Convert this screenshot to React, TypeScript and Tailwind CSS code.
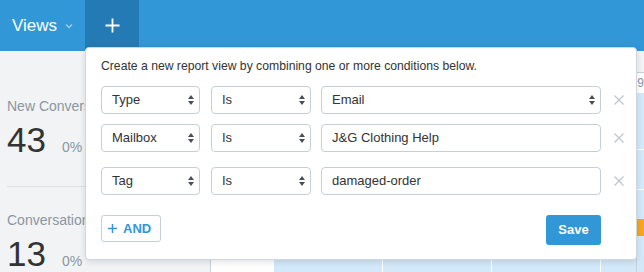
import React from 'react'

const Arrows = () => (
  <svg width="6" height="10" viewBox="0 0 6 10" className="shrink-0">
    <path d="M0 4 L3 0 L6 4 Z" fill="#4a4f55" />
    <path d="M0 6 L3 10 L6 6 Z" fill="#4a4f55" />
  </svg>
)

const Remove = () => (
  <svg width="10" height="10" viewBox="0 0 10 10" className="shrink-0">
    <path d="M0.5 0.5 L9.5 9.5 M9.5 0.5 L0.5 9.5" stroke="#bfc4c9" strokeWidth="1.2" />
  </svg>
)

const Field: React.FC<{ label: string; select?: boolean; className: string }> = ({ label, select, className }) => (
  <div
    className={`h-full flex items-center justify-between pl-[10px] pr-[5px] rounded-[4px] border border-[#c6ced6] bg-white text-[13px] text-[#333] ${className}`}
  >
    <span>{label}</span>
    {select && <Arrows />}
  </div>
)

const rows = [
  { field: 'Type', value: 'Email', valueSelect: true },
  { field: 'Mailbox', value: 'J&G Clothing Help', valueSelect: false },
  { field: 'Tag', value: 'damaged-order', valueSelect: false },
]

const Stat: React.FC<{ label: string; value: string; className?: string }> = ({ label, value, className }) => (
  <div className={className}>
    <div className="text-[14px] leading-[20px] text-[#8b97a1] whitespace-nowrap">{label}</div>
    <div className="flex items-baseline mt-[6px]">
      <span className="text-[35px] leading-[35px] text-[#333]">{value}</span>
      <span className="ml-[16px] text-[14px] text-[#8b97a1]">0%</span>
    </div>
  </div>
)

export default function App() {
  return (
    <div className="relative w-[644px] h-[272px] overflow-hidden bg-[#f1f3f5] font-['Liberation_Sans',Arial,sans-serif]">
      {/* Header */}
      <div className="h-[51px] bg-[#3197d6] flex items-stretch">
        <div className="flex items-center pl-[12px] w-[85px]">
          <span className="text-[17px] text-white">Views</span>
          <svg width="8" height="6" viewBox="0 0 8 6" className="ml-[8px] mt-[1px]">
            <path d="M1 1.5 L4 4.5 L7 1.5" stroke="#9fcbea" strokeWidth="1.5" fill="none" />
          </svg>
        </div>
        <div className="w-[54px] bg-[#247ab4] flex items-center justify-center">
          <svg width="15" height="15" viewBox="0 0 15 15">
            <path d="M7.5 0.5 V14.5 M0.5 7.5 H14.5" stroke="white" strokeWidth="1.8" />
          </svg>
        </div>
      </div>

      {/* Body behind the popover */}
      <div className="flex h-[221px]">
        <div className="w-[214px] pl-[7px] pt-[45px]">
          <Stat label="New Conversations" value="43" />
          <div className="mt-[28px] mr-[14px] h-px bg-[#dde2e6]" />
          <Stat label="Conversations per Day" value="13" className="mt-[23px]" />
        </div>
        <div className="flex-1 mt-[21px] flex border-l border-[#c9d1d9]">
          <div className="w-[63px] bg-white" />
          <div className="w-[108px] bg-[#d3e9f9]" />
          <div className="w-[109px] bg-[#d3e9f9] border-l border-white" />
          <div className="w-[109px] bg-[#d3e9f9] border-l border-white" />
          <div className="w-[36px] bg-[#d3e9f9] border-l border-white" />
          <div className="flex-1 flex flex-col border-l border-t border-[#c9d1d9]">
            <div className="h-[20px] bg-white text-[12px] text-[#8b97a1] leading-[20px] whitespace-nowrap">9</div>
            <div className="h-[56px] bg-[#d3e9f9]" />
            <div className="h-[40px] bg-[#d3e9f9] border-t border-white" />
            <div className="flex-1 bg-[#d3e9f9] border-t border-white pt-[29px]">
              <div className="h-[17px] bg-[#f5a623]" />
            </div>
          </div>
        </div>
      </div>

      {/* New report view popover */}
      <div className="absolute left-[85px] top-[47px] w-[552px] h-[213px] bg-white border border-[#cfd6dc] rounded-[4px] shadow-[0_2px_6px_rgba(0,0,0,0.12)] pl-[15px] pt-[10px]">
        <p className="text-[12.2px] leading-[16px] text-[#333] whitespace-nowrap">
          Create a new report view by combining one or more conditions below.
        </p>
        <div className="mt-[12px] flex flex-col">
          {rows.map((r, i) => (
            <div key={r.field} className={`flex items-center h-[28px] ${i === 1 ? 'mt-[10px]' : i === 2 ? 'mt-[15px]' : ''}`}>
              <Field label={r.field} select className="w-[99px]" />
              <Field label="Is" select className="ml-[11px] w-[100px]" />
              <Field label={r.value} select={r.valueSelect} className="ml-[10px] w-[280px]" />
              <div className="ml-[13px]">
                <Remove />
              </div>
            </div>
          ))}
        </div>
        <div className="mt-[20px] flex items-start w-[500px] justify-between">
          <button className="h-[27px] w-[60px] rounded-[3px] border border-[#c6ced6] bg-white flex items-center pl-[6px] text-[13px] font-bold text-[#3197d6]">
            <svg width="9" height="9" viewBox="0 0 9 9" className="mr-[6px]">
              <path d="M4.5 0 V9 M0 4.5 H9" stroke="#3197d6" strokeWidth="1.5" />
            </svg>
            AND
          </button>
          <button className="h-[30px] w-[55px] rounded-[3px] bg-[#3197d6] text-white text-[13px] font-bold">
            Save
          </button>
        </div>
      </div>
    </div>
  )
}
